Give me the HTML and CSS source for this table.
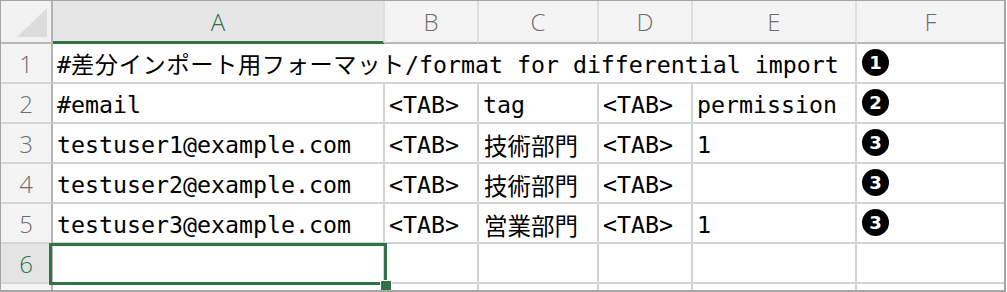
FILE: index.html
```html
<!DOCTYPE html>
<html lang="ja">
<head>
<meta charset="utf-8">
<title>sheet</title>
<link rel="stylesheet" href="styles.css">
</head>
<body>
<div class="sheet">
  <div class="hdr corner"><svg class="tri" width="50" height="41" viewBox="0 0 50 41"><polygon points="16,36 46,36 46,7" fill="#dcdcdc"/></svg></div>
  <div class="hdr col sel">A</div>
  <div class="hdr col">B</div>
  <div class="hdr col">C</div>
  <div class="hdr col">D</div>
  <div class="hdr col">E</div>
  <div class="hdr col last">F</div>

  <div class="rn">1</div>
  <div class="c span5">#<span class="jp">差分インポート用フォーマット</span>/format for differential import</div>
  <div class="c f last"><span class="num">1</span></div>

  <div class="rn">2</div>
  <div class="c">#email</div>
  <div class="c">&lt;TAB&gt;</div>
  <div class="c">tag</div>
  <div class="c">&lt;TAB&gt;</div>
  <div class="c">permission</div>
  <div class="c f last"><span class="num">2</span></div>

  <div class="rn">3</div>
  <div class="c">testuser1@example.com</div>
  <div class="c">&lt;TAB&gt;</div>
  <div class="c cjk">技術部門</div>
  <div class="c">&lt;TAB&gt;</div>
  <div class="c">1</div>
  <div class="c f last"><span class="num">3</span></div>

  <div class="rn">4</div>
  <div class="c">testuser2@example.com</div>
  <div class="c">&lt;TAB&gt;</div>
  <div class="c cjk">技術部門</div>
  <div class="c">&lt;TAB&gt;</div>
  <div class="c"></div>
  <div class="c f last"><span class="num">3</span></div>

  <div class="rn">5</div>
  <div class="c">testuser3@example.com</div>
  <div class="c">&lt;TAB&gt;</div>
  <div class="c cjk">営業部門</div>
  <div class="c">&lt;TAB&gt;</div>
  <div class="c">1</div>
  <div class="c f last"><span class="num">3</span></div>

  <div class="rn selrow">6</div>
  <div class="c active"><div class="selbox"><div class="handle"></div></div></div>
  <div class="c"></div>
  <div class="c"></div>
  <div class="c"></div>
  <div class="c"></div>
  <div class="c last"></div>

  <div class="rn end"></div>
  <div class="c end"></div>
  <div class="c end"></div>
  <div class="c end"></div>
  <div class="c end"></div>
  <div class="c end"></div>
  <div class="c end last"></div>
</div>
</body>
</html>
```

FILE: styles.css
```css
html, body {
  margin: 0;
  background: #fff;
}

.sheet {
  box-sizing: border-box;
  width: 1006px;
  height: 292px;
  border: solid #a6a6a6;
  border-width: 1px 2px 2px 1px;
  display: grid;
  grid-template-columns: 52px 332px 94px 120px 94px 164px 1fr;
  grid-template-rows: 43px repeat(6, 40px) 1fr;
  font-family: "DejaVu Sans Mono", "Noto Sans CJK JP", monospace;
  font-size: 23.25px;
  color: #000;
  overflow: hidden;
}

.hdr {
  box-sizing: border-box;
  background: #f4f4f4;
  border-bottom: 2px solid #b8b8b8;
  border-right: 2px solid #dedede;
  display: flex;
  align-items: center;
  justify-content: center;
  font-family: "Open Sans", "Noto Sans", sans-serif;
  font-weight: 300;
  font-size: 24px;
  color: #6e6e6e;
  padding-bottom: 1px;
}

.corner {
  border-right: 2px solid #b3b3b3;
  background: #f2f2f2;
  display: block;
  padding: 0;
}

.tri {
  display: block;
}

.hdr.sel {
  background: #e6e6e6;
  color: #317346;
  border-bottom-color: #317346;
  box-shadow: inset 0 -1px 0 #317346;
}

.hdr.last {
  border-right: none;
}

.rn {
  box-sizing: border-box;
  background: #f4f4f4;
  border-right: 2px solid #b3b3b3;
  border-bottom: 2px solid #d6d6d6;
  display: flex;
  align-items: center;
  justify-content: center;
  font-family: "Open Sans", "Noto Sans", sans-serif;
  font-weight: 300;
  font-size: 24px;
  color: #6e6e6e;
}

.rn.selrow {
  background: #e4e4e4;
  color: #317346;
}

.c {
  box-sizing: border-box;
  border-right: 2px solid #d4d4d4;
  border-bottom: 2px solid #d4d4d4;
  padding: 2px 0 0 4px;
  line-height: 38px;
  white-space: nowrap;
  min-width: 0;
}

.c.last {
  border-right: none;
}

.c.end, .rn.end {
  border-bottom: none;
}

.span5 {
  grid-column: span 5;
}

.jp {
  letter-spacing: 0.6px;
}

.cjk {
  font-family: "Noto Sans CJK JP", sans-serif;
  font-size: 23.5px;
  padding-left: 5px;
}

.f {
  display: block;
  padding: 5px 0 0 5px;
  line-height: 1;
}

.num {
  display: block;
  box-sizing: border-box;
  width: 27px;
  height: 27px;
  border-radius: 50%;
  background: #000;
  color: #fff;
  font-family: "DejaVu Sans", sans-serif;
  font-weight: bold;
  font-size: 18px;
  line-height: 27px;
  text-align: center;
}

.active {
  position: relative;
}

.selbox {
  position: absolute;
  left: -4px;
  top: -1px;
  right: -4px;
  bottom: -3px;
  border: 3px solid #317346;
}

.handle {
  position: absolute;
  right: -7px;
  bottom: -9px;
  width: 10px;
  height: 10px;
  background: #317346;
  box-shadow: 0 0 0 1px #fff;
}
```
